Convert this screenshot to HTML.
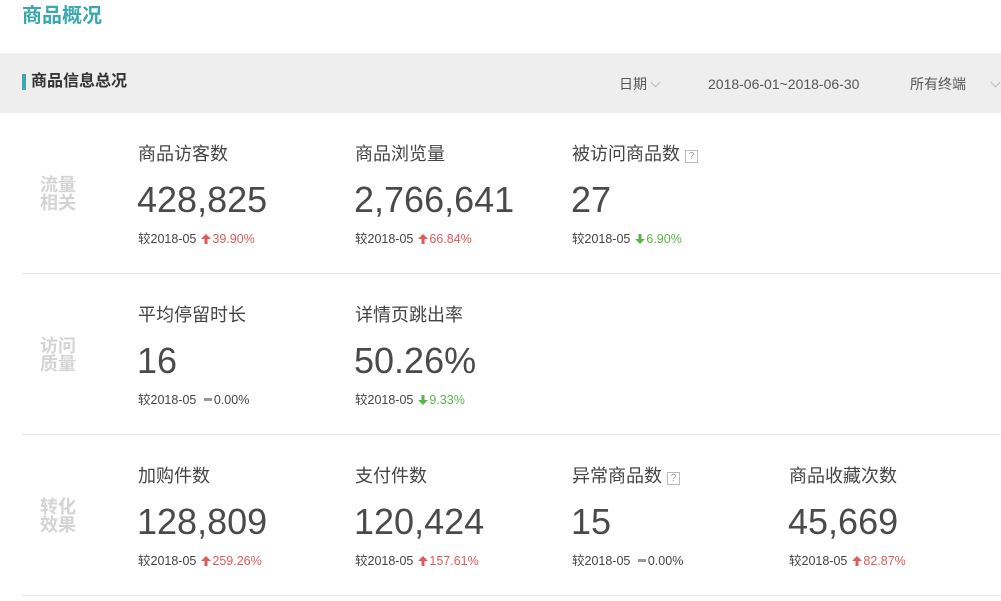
<!DOCTYPE html>
<html><head><meta charset="utf-8"><style>
*{margin:0;padding:0;box-sizing:border-box}
body{width:1001px;height:601px;overflow:hidden;background:#fff;font-family:"Liberation Sans","Noto Sans CJK SC",sans-serif;position:relative;color:#555}
.a{position:absolute;white-space:nowrap}
.title{left:22px;top:3px;font-size:20px;font-weight:bold;color:#3aa8ae;line-height:26px}
.bar{left:0;top:53px;width:1001px;height:60px;background:#eeeeee}
.acc{left:22px;top:74px;width:4px;height:16px;background:#3aa8ae}
.sub{left:31px;top:72px;font-size:16px;font-weight:bold;color:#333;line-height:20px}
.f{font-size:14px;color:#555;top:75px;line-height:18px}
.chev{display:inline-block;width:7px;height:7px;border-right:1px solid #bbb;border-bottom:1px solid #bbb;transform:rotate(45deg);margin-left:5px;position:relative;top:-3px}
.line{left:22px;width:979px;height:1px;background:#e8e8e8}
.lab{left:40px;font-size:18px;font-weight:bold;color:#d4d4d4;line-height:18px;width:40px}
.h{font-size:18px;color:#444;line-height:22px}
.n{font-size:36px;color:#4a4a4a;line-height:40px}
.c{font-size:12.5px;color:#444;line-height:16px}
.up{color:#e05a5a}.dn{color:#5bb54a}
.q{display:inline-block;width:13px;height:13px;border:1px solid #bbb;font-size:10px;line-height:11px;text-align:center;color:#999;margin-left:5px;vertical-align:1px}
.dash{display:inline-block;width:8px;height:3px;background:#999;margin:0 2px 0 4px;vertical-align:3px}
svg.ar{width:10px;height:10px;margin:0 1px 0 5px;vertical-align:-1px}
</style></head><body>
<div class="a title">商品概况</div>
<div class="a bar"></div>
<div class="a acc"></div>
<div class="a sub">商品信息总况</div>
<div class="a f" style="left:619px">日期<span class="chev"></span></div>
<div class="a f" style="left:708px">2018-06-01~2018-06-30</div>
<div class="a f" style="left:910px">所有终端</div>
<div class="a" style="left:987px;top:76px"><span class="chev"></span></div>

<div class="a lab" style="top:176px">流量<br>相关</div>
<div class="a lab" style="top:337px">访问<br>质量</div>
<div class="a lab" style="top:498px">转化<br>效果</div>
<div class="a line" style="top:273px"></div>
<div class="a line" style="top:434px"></div>
<div class="a line" style="top:595px"></div>

<div class="a h" style="left:138px;top:143px">商品访客数</div>
<div class="a n" style="left:137px;top:180px">428,825</div>
<div class="a c" style="left:138px;top:231px">较2018-05<svg class="ar" viewBox="0 0 10 10"><path d="M5 0L10 5H6.5V10H3.5V5H0Z" fill="#e05a5a"/></svg><span class="up">39.90%</span></div>
<div class="a h" style="left:355px;top:143px">商品浏览量</div>
<div class="a n" style="left:354px;top:180px">2,766,641</div>
<div class="a c" style="left:355px;top:231px">较2018-05<svg class="ar" viewBox="0 0 10 10"><path d="M5 0L10 5H6.5V10H3.5V5H0Z" fill="#e05a5a"/></svg><span class="up">66.84%</span></div>
<div class="a h" style="left:572px;top:143px">被访问商品数<span class="q">?</span></div>
<div class="a n" style="left:571px;top:180px">27</div>
<div class="a c" style="left:572px;top:231px">较2018-05<svg class="ar" viewBox="0 0 10 10"><path d="M5 10L10 5H6.5V0H3.5V5H0Z" fill="#5bb54a"/></svg><span class="dn">6.90%</span></div>

<div class="a h" style="left:138px;top:304px">平均停留时长</div>
<div class="a n" style="left:137px;top:341px">16</div>
<div class="a c" style="left:138px;top:392px">较2018-05 <span class="dash"></span>0.00%</div>
<div class="a h" style="left:355px;top:304px">详情页跳出率</div>
<div class="a n" style="left:354px;top:341px">50.26%</div>
<div class="a c" style="left:355px;top:392px">较2018-05<svg class="ar" viewBox="0 0 10 10"><path d="M5 10L10 5H6.5V0H3.5V5H0Z" fill="#5bb54a"/></svg><span class="dn">9.33%</span></div>

<div class="a h" style="left:138px;top:465px">加购件数</div>
<div class="a n" style="left:137px;top:502px">128,809</div>
<div class="a c" style="left:138px;top:553px">较2018-05<svg class="ar" viewBox="0 0 10 10"><path d="M5 0L10 5H6.5V10H3.5V5H0Z" fill="#e05a5a"/></svg><span class="up">259.26%</span></div>
<div class="a h" style="left:355px;top:465px">支付件数</div>
<div class="a n" style="left:354px;top:502px">120,424</div>
<div class="a c" style="left:355px;top:553px">较2018-05<svg class="ar" viewBox="0 0 10 10"><path d="M5 0L10 5H6.5V10H3.5V5H0Z" fill="#e05a5a"/></svg><span class="up">157.61%</span></div>
<div class="a h" style="left:572px;top:465px">异常商品数<span class="q">?</span></div>
<div class="a n" style="left:571px;top:502px">15</div>
<div class="a c" style="left:572px;top:553px">较2018-05 <span class="dash"></span>0.00%</div>
<div class="a h" style="left:789px;top:465px">商品收藏次数</div>
<div class="a n" style="left:788px;top:502px">45,669</div>
<div class="a c" style="left:789px;top:553px">较2018-05<svg class="ar" viewBox="0 0 10 10"><path d="M5 0L10 5H6.5V10H3.5V5H0Z" fill="#e05a5a"/></svg><span class="up">82.87%</span></div>
</body></html>
